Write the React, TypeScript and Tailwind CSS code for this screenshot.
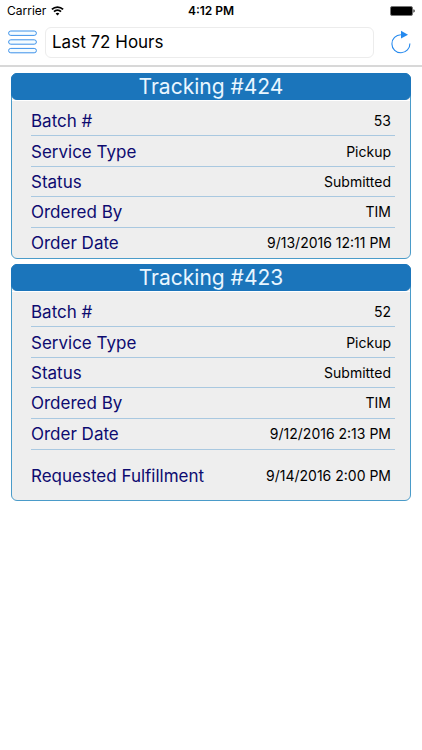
type Field = { label: string; value: string };

type Order = { tracking: string; fields: Field[]; fulfillment?: string };

const orders: Order[] = [
  {
    tracking: "424",
    fields: [
      { label: "Batch #", value: "53" },
      { label: "Service Type", value: "Pickup" },
      { label: "Status", value: "Submitted" },
      { label: "Ordered By", value: "TIM" },
      { label: "Order Date", value: "9/13/2016 12:11 PM" },
    ],
  },
  {
    tracking: "423",
    fields: [
      { label: "Batch #", value: "52" },
      { label: "Service Type", value: "Pickup" },
      { label: "Status", value: "Submitted" },
      { label: "Ordered By", value: "TIM" },
      { label: "Order Date", value: "9/12/2016 2:13 PM" },
    ],
    fulfillment: "9/14/2016 2:00 PM",
  },
];

function StatusBar() {
  return (
    <div className="grid h-[22px] grid-cols-3 items-center px-[7px] text-xs leading-4">
      <div className="flex items-center gap-[5px]">
        <span>Carrier</span>
        <svg width="13" height="10" viewBox="0 0 13 10" aria-hidden="true">
          <path d="M6.5 9.6 4.6 7.6a2.7 2.7 0 0 1 3.8 0Z" fill="#000" />
          <path d="M3 5.7a5 5 0 0 1 7 0M.9 3.4a8 8 0 0 1 11.2 0" fill="none" stroke="#000" strokeWidth="1.8" />
        </svg>
      </div>
      <span className="text-center font-semibold">4:12 PM</span>
      <div className="flex justify-end">
        <svg width="26" height="10" viewBox="0 0 26 10" aria-hidden="true">
          <rect x="1.5" y=".5" width="22" height="9" rx="1.5" fill="#000" stroke="#777" />
          <path d="M24.4 3.3q1.4.3 1.4 1.7t-1.4 1.7Z" fill="#333" />
        </svg>
      </div>
    </div>
  );
}

function Toolbar() {
  return (
    <div className="flex h-[45px] items-start border-b-2 border-[#d8d8d8] pr-[10px] pl-2 pt-[5px]">
      <button type="button" aria-label="Menu" className="flex h-[30px] w-[29px] items-center">
        <svg width="29" height="24" viewBox="0 0 29 24" fill="#f5fcff" stroke="#3d92ea" aria-hidden="true">
          <rect x=".6" y="1" width="27.8" height="4.4" rx="2.2" />
          <rect x=".6" y="9.8" width="27.8" height="4.4" rx="2.2" />
          <rect x=".6" y="18.4" width="27.8" height="4.4" rx="2.2" />
        </svg>
      </button>
      <input
        type="text"
        aria-label="Time range"
        defaultValue="Last 72 Hours"
        className="ml-2 h-[31px] min-w-0 flex-1 rounded-md border border-[#ececec] bg-white px-[6px] pb-[2px] text-[17px] leading-6 text-black outline-none"
      />
      <button type="button" aria-label="Refresh" className="ml-4 flex h-[30px] w-[22px] items-center justify-center">
        <svg width="22" height="24" viewBox="0 0 22 24" aria-hidden="true">
          <path d="M19.9 13.5A9 9 0 1 1 10.9 4.8" fill="none" stroke="#2589ee" strokeWidth="1.1" />
          <path d="M11 .8v7.8l7-3.9Z" fill="#2589ee" />
        </svg>
      </button>
    </div>
  );
}

function Row({ label, value }: Field) {
  return (
    <div className="flex items-center justify-between border-b border-[#a9c8e0] pr-1 pt-px last:border-b-0">
      <dt className="text-[17px] leading-6 text-[#0d0b70]">{label}</dt>
      <dd className="text-[14px] leading-6 text-black">{value}</dd>
    </div>
  );
}

function OrderCard({ order }: { order: Order }) {
  return (
    <section className="rounded-md border border-[#4a9bc9] bg-[#eeeeee]">
      <h2 className="-mx-px -mt-px rounded-md border border-[#1b75bb] bg-[#1b75bb] text-center text-[21px] leading-[25px] text-[#e9f6ff]">
        Tracking #{order.tracking}
      </h2>
      <dl className="border-t border-white pl-[19px] pr-[15px] pt-[5px]">
        <div className={`box-content grid min-h-[152px] auto-rows-fr ${order.fulfillment ? "border-b border-[#a9c8e0]" : ""}`}>
          {order.fields.map((field) => (
            <Row key={field.label} {...field} />
          ))}
        </div>
        {order.fulfillment && (
          <div className="grid h-[50px]">
            <Row label="Requested Fulfillment" value={order.fulfillment} />
          </div>
        )}
      </dl>
    </section>
  );
}

export default function App() {
  return (
    <div className="min-h-screen bg-white font-[Inter,'Liberation_Sans',sans-serif] text-black">
      <header>
        <StatusBar />
        <Toolbar />
      </header>
      <main className="flex flex-col gap-[5px] px-[11px] pt-[6px]">
        {orders.map((order) => (
          <OrderCard key={order.tracking} order={order} />
        ))}
      </main>
    </div>
  );
}
